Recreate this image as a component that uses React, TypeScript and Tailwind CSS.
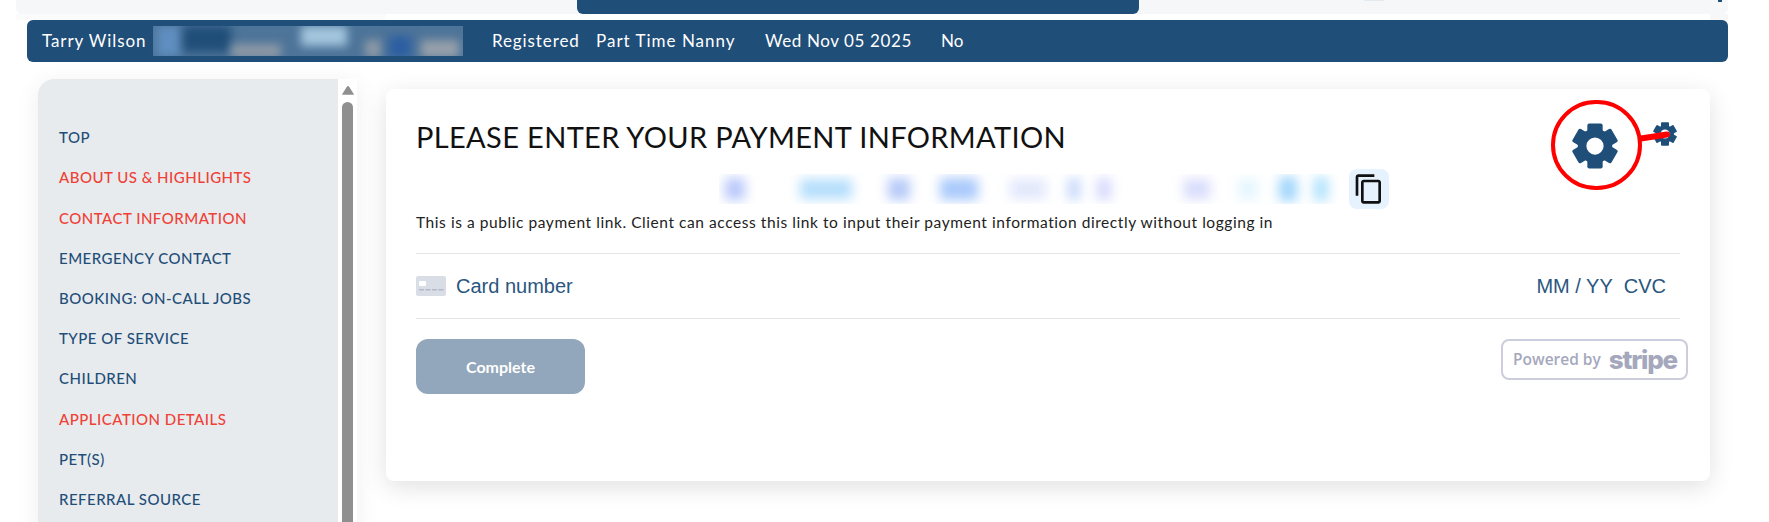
import { MdOutlineContentCopy } from 'react-icons/md'

const navItems = [
  { label: 'TOP' },
  { label: 'ABOUT US & HIGHLIGHTS', required: true },
  { label: 'CONTACT INFORMATION', required: true },
  { label: 'EMERGENCY CONTACT' },
  { label: 'BOOKING: ON-CALL JOBS' },
  { label: 'TYPE OF SERVICE' },
  { label: 'CHILDREN' },
  { label: 'APPLICATION DETAILS', required: true },
  { label: 'PET(S)' },
  { label: 'REFERRAL SOURCE' },
]

const linkBlobs = [
  { id: 1, className: 'ml-[6px] w-[20px] h-[22px] bg-[#b9c8fb]' },
  { id: 2, className: 'ml-[55px] w-[52px] h-[20px] bg-[#b5defc]' },
  { id: 3, className: 'ml-[36px] w-[22px] h-[22px] bg-[#b5c9f8]' },
  { id: 4, className: 'ml-[30px] w-[38px] h-[22px] bg-[#a9c9fb]' },
  { id: 5, className: 'ml-[32px] w-[36px] h-[20px] bg-[#e2e8fc]' },
  { id: 6, className: 'ml-[22px] w-[12px] h-[22px] bg-[#c5d7fa]' },
  { id: 7, className: 'ml-[17px] w-[14px] h-[22px] bg-[#d5d8fb]' },
  { id: 8, className: 'ml-[73px] w-[26px] h-[20px] bg-[#d8dcfb]' },
  { id: 9, className: 'ml-[28px] w-[20px] h-[20px] bg-[#e4f6fd]' },
  { id: 10, className: 'ml-[21px] w-[18px] h-[24px] bg-[#9fd6fb]' },
  { id: 11, className: 'ml-[17px] w-[14px] h-[24px] bg-[#aee2fb]' },
]

const headerBlobs = [
  { id: 1, className: 'ml-[4px] w-[24px] h-[30px] bg-[#5f8fc0]' },
  { id: 2, className: 'ml-[2px] w-[48px] h-[26px] bg-[#1f4e79]' },
  { id: 3, className: 'mt-[18px] w-[50px] h-[14px] bg-[#8e9aa6]' },
  { id: 4, className: 'ml-[20px] w-[46px] h-[20px] bg-[#a4c6de]' },
  { id: 5, className: 'ml-[18px] mt-[14px] w-[16px] h-[18px] bg-[#8e9aa6]' },
  { id: 6, className: 'ml-[8px] mt-[10px] w-[22px] h-[22px] bg-[#2c5fa3]' },
  { id: 7, className: 'ml-[10px] mt-[14px] w-[38px] h-[18px] bg-[#97a0aa]' },
]

function CardIcon() {
  return (
    <svg width="30" height="20" viewBox="0 0 30 20" className="shrink-0">
      <rect width="30" height="20" rx="2" fill="#d9dde6" />
      <rect x="3" y="5" width="7" height="5" rx="1" fill="#ffffff" />
      <rect x="3" y="13" width="5" height="1.5" fill="#b4b9c8" />
      <rect x="9.5" y="13" width="5" height="1.5" fill="#b4b9c8" />
      <rect x="16" y="13" width="5" height="1.5" fill="#b4b9c8" />
      <rect x="22.5" y="13" width="5" height="1.5" fill="#b4b9c8" />
    </svg>
  )
}

// chunky six tooth cog, the icon font one in the app is heavier than MdSettings
function Gear({ className }: { className: string }) {
  return (
    <svg viewBox="0 0 48 48" className={className}>
      {[0, 60, 120, 180, 240, 300].map((angle) => (
        <rect key={angle} x="16" y="0.5" width="16" height="12" rx="2" fill="#1f4e79" transform={`rotate(${angle} 24 24)`} />
      ))}
      <circle cx="24" cy="24" r="18" fill="#1f4e79" />
      <circle cx="24" cy="24" r="9" fill="#ffffff" />
    </svg>
  )
}

export default function App() {
  return (
    <div className="relative h-[522px] w-full overflow-hidden bg-white font-['Lato',sans-serif]">
      <div className="ml-[16px] flex h-[14px] w-[1712px] rounded-b-md bg-[#f6f7f9]">
        <div className="ml-[561px] h-full w-[562px] rounded-b-md bg-[#1f4e79]" />
        <div className="ml-[225px] h-px w-[20px] bg-[#e3e9f0]" />
        <div className="ml-[334px] h-[2px] w-[4px] bg-[#1f4e79]" />
      </div>

      <div className="ml-[16px] flex h-[6px] w-[1712px] justify-between">
        <div className="h-full w-[370px] bg-[#fbfbfb]" />
        <div className="h-full w-[18px] bg-[#f7f7f7]" />
      </div>

      <div className="ml-[27px] flex h-[42px] w-[1701px] items-center rounded-md bg-[#1f4e79] pl-[15px] text-[17px] text-white">
        <span className="w-[111px] tracking-[0.9px]">Tarry Wilson</span>
        <div className="flex h-[30px] w-[310px] overflow-hidden bg-[#4d7499]">
          {headerBlobs.map((blob) => (
            <div key={blob.id} className={`shrink-0 blur-[5px] ${blob.className}`} />
          ))}
        </div>
        <span className="ml-[29px] w-[104px] tracking-[0.9px]">Registered</span>
        <span className="w-[169px] tracking-[1px]">Part Time Nanny</span>
        <span className="w-[176px] tracking-[0.6px]">Wed Nov 05 2025</span>
        <span>No</span>
      </div>

      <div className="ml-[38px] mt-[17px] flex items-start">
        <div className="flex h-[460px] w-[319px] shrink-0 overflow-hidden rounded-tl-2xl shadow-[0_4px_24px_rgba(0,0,0,0.07)]">
          <nav className="w-[300px] bg-[#e8ebee] pl-[21px] pt-[38.4px]">
            {navItems.map((item) => (
              <div
                key={item.label}
                className={`flex h-[40.2px] items-center text-[15px] font-medium tracking-[0.48px] ${
                  item.required ? 'text-[#ef4136]' : 'text-[#1f4e79]'
                }`}
              >
                {item.label}
              </div>
            ))}
          </nav>
          <div className="flex w-[19px] flex-col items-center bg-white pt-[7px]">
            <svg width="14" height="10" viewBox="0 0 14 10">
              <path d="M5.5 1Q7-.8 8.5 1L14 10H0z" fill="#8f8f8f" />
            </svg>
            <div className="mt-[7px] h-[500px] w-[11px] rounded-full bg-[#8f8f8f]" />
          </div>
        </div>

        <div className="ml-[29px] mt-[10px] h-[392px] w-[1324px] shrink-0 rounded-lg bg-white px-[30px] pt-[28px] shadow-[0_6px_24px_rgba(0,0,0,0.12)]">
          <h1 className="text-[29px] leading-[40px] tracking-[0.35px] text-[#111111]">
            PLEASE ENTER YOUR PAYMENT INFORMATION
          </h1>

          <div className="mt-[12px] flex h-[40px] items-center">
            <div className="ml-[303px] flex h-[30px] w-[621px] items-center overflow-hidden">
              {linkBlobs.map((blob) => (
                <div key={blob.id} className={`shrink-0 blur-[6px] ${blob.className}`} />
              ))}
            </div>
            <button className="ml-[9px] flex h-[40px] w-[40px] items-center justify-center rounded-lg bg-[#e6f2fd] text-[#111111]">
              <MdOutlineContentCopy size={32} />
            </button>
          </div>

          <p className="mt-[3px] text-[15.5px] leading-[20px] tracking-[0.565px] text-[#222222]">
            This is a public payment link. Client can access this link to input their payment information directly without logging in
          </p>

          <div className="mt-[21px] flex h-[66px] w-[1264px] items-center border-y border-[#e2e4e8] pr-[14px] font-['Liberation_Sans',sans-serif] text-[20px] text-[#2a5680]">
            <CardIcon />
            <span className="ml-[10px]">Card number</span>
            <span className="ml-auto">MM / YY</span>
            <span className="ml-[11px]">CVC</span>
          </div>

          <div className="mt-[20px] flex items-start justify-between">
            <button className="h-[55px] w-[169px] rounded-xl bg-[#92a7bb] text-[16px] font-bold text-white">
              Complete
            </button>
            <div className="mr-[-8px] flex h-[41px] w-[187px] items-center rounded-lg border-2 border-[#cbcddc] pl-[10px] text-[#a5a8bd]">
              <span className="font-['Open_Sans',sans-serif] text-[15.5px] font-semibold">Powered by</span>
              <span className="ml-[8px] font-['Inter',sans-serif] text-[26px] font-extrabold leading-none tracking-[-1.2px]">stripe</span>
            </div>
          </div>
        </div>
      </div>

      <div className="absolute left-[1551px] top-[100px] flex h-[90px] w-[91px] items-center justify-center rounded-full border-[4px] border-[#fe0000]">
        <Gear className="mt-[2px] mr-[4px] h-[46px] w-[46px]" />
      </div>
      <Gear className="absolute left-[1653px] top-[122px] h-[24px] w-[24px]" />
      <svg width="36" height="12" viewBox="0 0 36 12" className="absolute left-[1638px] top-[130px]">
        <path d="M3 8.5L29 4.5" stroke="#fe0000" strokeWidth="6" strokeLinecap="round" />
      </svg>
    </div>
  )
}
